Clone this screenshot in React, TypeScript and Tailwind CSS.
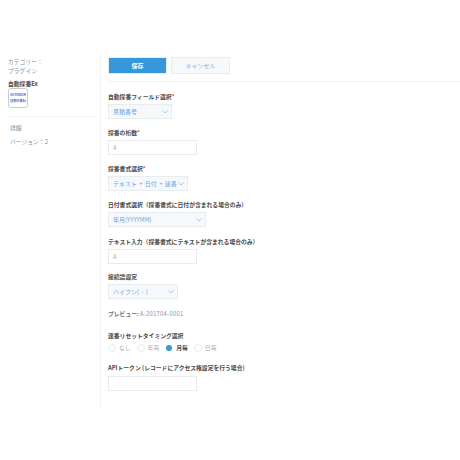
import React from 'react';

const font = { fontFamily: '"Noto Sans CJK JP", "Noto Sans", sans-serif' };

const labelClass = 'text-[5.8px] leading-[10px] font-bold text-[#4a4a4a] whitespace-nowrap';
const fieldClass = 'h-[15px] border border-[#e8eced] bg-[#f6f9fb] flex items-center justify-between pl-[4px] pr-[3px] text-[6px] text-[#6f9fdc] whitespace-nowrap [word-spacing:1px]';
const inputClass = 'h-[15px] w-[89px] border border-[#e8eced] bg-white flex items-center pl-[4px] text-[6px] text-[#a8b0b3]';

function Chevron() {
  return (
    <svg width="6" height="4" viewBox="0 0 6 4" fill="none" className="shrink-0">
      <path d="M0.5 0.5 L3 3 L5.5 0.5" stroke="#9cbbdc" strokeWidth="0.8" />
    </svg>
  );
}

function Select({ value, width }: { value: string; width: string }) {
  return (
    <div className={`${fieldClass} ${width} mt-[2px]`}>
      <span>{value}</span>
      <Chevron />
    </div>
  );
}

function Radio({ label, checked }: { label: string; checked?: boolean }) {
  return (
    <div className="flex items-center gap-[3px]">
      {checked ? (
        <span className="size-[6px] rounded-full bg-[#3498db] mx-px" />
      ) : (
        <span className="size-[8px] rounded-full border border-[#e8eced] bg-white" />
      )}
      <span className={checked ? 'text-[5.8px] font-bold text-[#4a4a4a]' : 'text-[5.8px] text-[#a8b0b3]'}>{label}</span>
    </div>
  );
}

export default function App() {
  return (
    <div className="w-[460px] h-[460px] bg-white pt-[57px] overflow-hidden" style={font}>
      <div className="flex h-[351px]">
        <aside className="w-[101px] border-r border-[#f0f2f3] shrink-0">
          <div className="pl-[8px] text-[5.8px] leading-[9px] text-[#8a9296]">
            <p>カテゴリー：</p>
            <p>プラグイン</p>
          </div>
          <p className="pl-[8px] mt-[5px] text-[5.8px] leading-[8px] font-bold text-[#4a4a4a]">自動採番Ex</p>
          <div className="ml-[8px] w-[20px] h-[20px] rounded-[3px] border border-[#c3cbd8] flex flex-col justify-center gap-[2px] px-[1px] bg-white">
            <span className="text-[3.2px] leading-[4px] font-bold text-[#3f6fc4] whitespace-nowrap overflow-hidden">AUTONUM</span>
            <span className="text-[3.2px] leading-[4px] font-bold text-[#3f6fc4] whitespace-nowrap overflow-hidden">自動採番Ex</span>
          </div>
          <div className="mt-[8px] mr-[2px] ml-[8px] border-t border-[#f0f2f3]" />
          <div className="pl-[10px] mt-[6px] text-[5.8px] leading-[9px] text-[#8a9296]">
            <p>詳細</p>
            <p className="mt-[5px]">バージョン：2</p>
          </div>
        </aside>

        <main className="flex-1 pl-[7px]">
          <div className="flex gap-[4px]">
            <button className="w-[59px] h-[17px] bg-[#3498db] border border-[#e8eced] text-white text-[6px] font-bold">保存</button>
            <button className="w-[59px] h-[17px] bg-[#f6f9fb] border border-[#e8eced] text-[#8fb0d8] text-[6px]">キャンセル</button>
          </div>
          <div className="mt-[7px] border-t border-[#f0f2f3]" />

          <p className={`${labelClass} mt-[10px]`}>自動採番フィールド選択<span className="text-[#e74c3c]">*</span></p>
          <Select value="見積番号" width="w-[64px]" />

          <p className={`${labelClass} mt-[9px]`}>採番の桁数<span className="text-[#e74c3c]">*</span></p>
          <div className={`${inputClass} mt-[2px]`}>4</div>

          <p className={`${labelClass} mt-[9px]`}>採番書式選択<span className="text-[#e74c3c]">*</span></p>
          <Select value="テキスト + 日付 + 連番" width="w-[80px]" />

          <p className={`${labelClass} mt-[9px]`}>日付書式選択（採番書式に日付が含まれる場合のみ）</p>
          <Select value="年月(YYYYMM)" width="w-[98px]" />

          <p className={`${labelClass} mt-[10px]`}>テキスト入力（採番書式にテキストが含まれる場合のみ）</p>
          <div className={`${inputClass} mt-[2px]`}>A</div>

          <p className={`${labelClass} mt-[8px]`}>接続語設定</p>
          <Select value="ハイフン( - )" width="w-[70px]" />

          <p className="mt-[10px] text-[5.8px] leading-[10px] whitespace-nowrap flex gap-[1px]">
            <span className="font-bold text-[#6b7478]">プレビュー:</span>
            <span className="text-[#8a9296] tracking-[0.3px]">A-201704-0001</span>
          </p>

          <p className={`${labelClass} mt-[12px]`}>連番リセットタイミング選択</p>
          <div className="flex gap-[6px] mt-[2px] h-[10px]">
            <Radio label="なし" />
            <Radio label="年毎" />
            <Radio label="月毎" checked />
            <Radio label="日毎" />
          </div>

          <p className={`${labelClass} mt-[10px]`}>APIトークン (レコードにアクセス権設定を行う場合)</p>
          <div className={`${inputClass} mt-[3px]`} />
        </main>
      </div>
    </div>
  );
}
